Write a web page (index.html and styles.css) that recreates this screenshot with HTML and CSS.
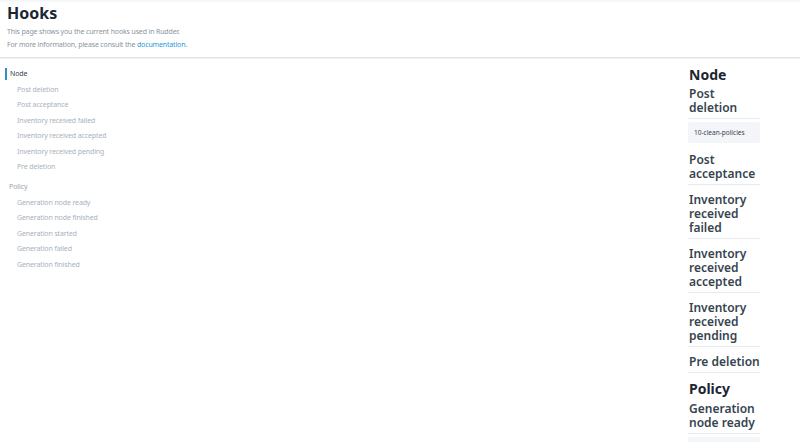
FILE: index.html
```html
<!DOCTYPE html>
<html>
<head>
<meta charset="utf-8">
<link rel="stylesheet" href="styles.css">
</head>
<body>
<header class="header">
  <h1 class="title">Hooks</h1>
  <p class="desc">This page shows you the current hooks used in Rudder.</p>
  <p class="desc">For more information, please consult the <a class="link" href="#">documentation</a>.</p>
</header>
<div class="main">
  <nav class="nav">
    <div class="nav-group active">Node</div>
    <div class="nav-item">Post deletion</div>
    <div class="nav-item">Post acceptance</div>
    <div class="nav-item">Inventory received failed</div>
    <div class="nav-item">Inventory received accepted</div>
    <div class="nav-item">Inventory received pending</div>
    <div class="nav-item">Pre deletion</div>
    <div class="nav-group">Policy</div>
    <div class="nav-item">Generation node ready</div>
    <div class="nav-item">Generation node finished</div>
    <div class="nav-item">Generation started</div>
    <div class="nav-item">Generation failed</div>
    <div class="nav-item">Generation finished</div>
  </nav>
  <div class="content">
    <h2 class="group-title">Node</h2>
    <section class="hook">
      <h3 class="hook-title">Post deletion</h3>
      <div class="script">10-clean-policies</div>
    </section>
    <section class="hook"><h3 class="hook-title">Post acceptance</h3></section>
    <section class="hook"><h3 class="hook-title">Inventory received failed</h3></section>
    <section class="hook"><h3 class="hook-title">Inventory received accepted</h3></section>
    <section class="hook"><h3 class="hook-title">Inventory received pending</h3></section>
    <section class="hook"><h3 class="hook-title">Pre deletion</h3></section>
    <h2 class="group-title policy">Policy</h2>
    <section class="hook">
      <h3 class="hook-title">Generation node ready</h3>
      <div class="script">&nbsp;</div>
    </section>
  </div>
</div>
</body>
</html>
```
FILE: styles.css
```css
html, body {
  margin: 0;
  padding: 0;
  background: #fff;
  font-family: "Noto Sans", "Open Sans", sans-serif;
  overflow: hidden;
  height: 442px;
}
.header {
  padding: 3px 7px 6px;
  border-bottom: 1px solid #dfe4ea;
  box-shadow: inset 0 3px 3px -2px #eef0f3, 0 1px 0 #eef1f5;
}
.title {
  margin: 0 0 2px;
  font-size: 16px;
  line-height: 20px;
  font-weight: 700;
  color: #1b2631;
}
.desc {
  margin: 0;
  font-size: 7px;
  line-height: 13px;
  color: #8a94a0;
  letter-spacing: -0.15px;
}
.link {
  color: #1e9bd7;
  text-decoration: none;
}
.main {
  display: flex;
  padding-top: 9px;
}
.nav {
  flex: 1;
  padding-left: 5px;
  padding-top: 1px;
}
.nav-group {
  font-size: 7px;
  line-height: 12px;
  color: #9aa5b1;
  padding-left: 2px;
  margin-top: 8px;
  margin-bottom: 3.5px;
  border-left: 2px solid transparent;
  letter-spacing: -0.1px;
}
.nav-group.active {
  margin-top: 0;
  color: #36434d;
  border-left-color: #2a93c8;
  padding-left: 3px;
}
.nav-item {
  font-size: 7px;
  line-height: 12px;
  color: #a7b2be;
  padding-left: 12px;
  margin-bottom: 3.5px;
  letter-spacing: -0.12px;
}
.content {
  width: 72px;
  margin-right: 40px;
}
.group-title {
  margin: 0 0 4px 1px;
  font-size: 14px;
  line-height: 16px;
  font-weight: 700;
  color: #1b2631;
}
.group-title.policy {
  margin-top: 0;
  margin-bottom: 5px;
}
.hook {
  padding-bottom: 5px;
}
.hook-title {
  margin: 0 0 3px;
  padding: 0 0 3px 1px;
  font-size: 12px;
  line-height: 14px;
  font-weight: 600;
  color: #36444f;
  border-bottom: 1px solid #e6ebf1;
}
.script {
  background: #f3f5f8;
  height: 21px;
  line-height: 21px;
  font-size: 6.5px;
  color: #36444f;
  padding-left: 6px;
  margin-top: 1px;
  margin-bottom: 5px;
  border-radius: 2px;
}
```
